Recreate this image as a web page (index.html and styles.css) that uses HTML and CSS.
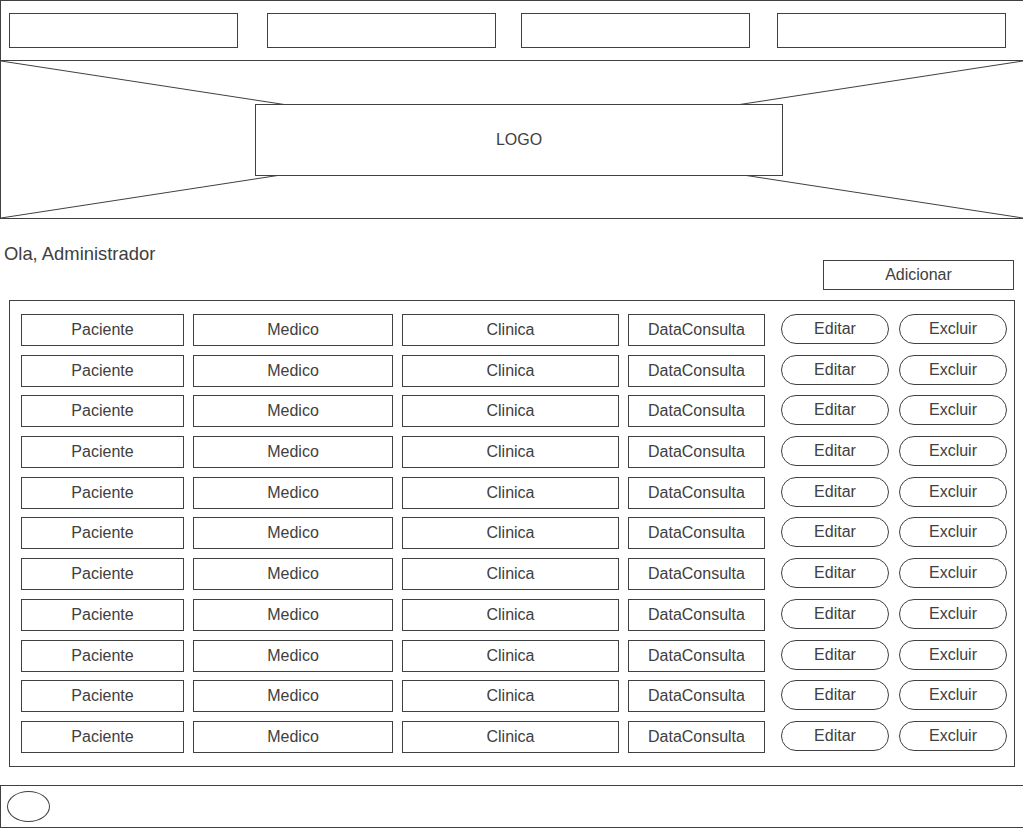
FILE: index.html
```html
<!DOCTYPE html>
<html lang="pt-BR">
<head>
  <meta charset="UTF-8">
  <title>Consultas - Administrador</title>
  <link rel="stylesheet" href="styles.css">
</head>
<body>
  <header class="topbar">
    <nav class="nav">
      <a class="nav-item" href="#"></a>
      <a class="nav-item" href="#"></a>
      <a class="nav-item" href="#"></a>
      <a class="nav-item" href="#"></a>
    </nav>
  </header>
  <section class="banner">
    <svg class="banner-cross" viewBox="0 0 100 100" preserveAspectRatio="none" aria-hidden="true">
      <line x1="0" y1="0" x2="100" y2="100" />
      <line x1="0" y1="100" x2="100" y2="0" />
    </svg>
    <div class="logo">LOGO</div>
  </section>

  <div class="toolbar">
    <p class="greeting">Ola, Administrador</p>
    <button class="add-btn">Adicionar</button>
  </div>

  <main class="consultas" id="consultas"></main>

  <footer class="footer">
    <div class="footer-dot"></div>
  </footer>

  <script>
    const list = document.getElementById("consultas");
    for (let i = 0; i < 11; i++) {
      const row = document.createElement("div");
      row.className = "row";
      row.innerHTML = `
        <div class="cell col-paciente">Paciente</div>
        <div class="cell col-medico">Medico</div>
        <div class="cell col-clinica">Clinica</div>
        <div class="cell col-data">DataConsulta</div>
        <button class="pill pill-edit">Editar</button>
        <button class="pill pill-delete">Excluir</button>`;
      list.appendChild(row);
    }
  </script>
</body>
</html>
```

FILE: styles.css
```css
html, body {
  margin: 0;
  padding: 0;
}
body {
  width: 1023px;
  overflow: hidden;
  background-color: #ffffff;
  color: #404040;
  font-family: "Liberation Sans", Arial, sans-serif;
  font-size: 16px;
}
button {
  font-family: inherit;
  font-size: 16px;
  color: #404040;
  background-color: #ffffff;
  padding: 0;
  cursor: pointer;
}

/* top nav */
.topbar {
  border: 1px solid #404040;
  border-right: none;
  padding: 12px 0 12px 8px;
}
.nav {
  display: flex;
  gap: 27px;
}
.nav-item {
  display: block;
  width: 229px;
  height: 35px;
  box-sizing: border-box;
  border: 1px solid #404040;
}
.nav-item:nth-child(2) {
  margin-left: 2px;
}
.nav-item:nth-child(3) {
  margin-left: -2px;
}

/* banner with image placeholder */
.banner {
  position: relative;
  height: 158px;
  box-sizing: border-box;
  border-left: 1px solid #404040;
  border-bottom: 1px solid #404040;
  padding: 43px 0 0 254px;
}
.banner-cross {
  position: absolute;
  left: 0;
  top: 0;
  width: 100%;
  height: 100%;
}
.banner-cross line {
  stroke: #404040;
  stroke-width: 1;
  vector-effect: non-scaling-stroke;
}
.banner .logo {
  position: relative;
  width: 528px;
  height: 72px;
  box-sizing: border-box;
  border: 1px solid #404040;
  background-color: #ffffff;
  display: flex;
  align-items: center;
  justify-content: center;
}

/* greeting + add */
.toolbar {
  display: flex;
  justify-content: space-between;
  align-items: flex-start;
  margin-top: 24px;
  padding: 0 9px 0 4px;
}
.greeting {
  margin: 0;
  font-size: 18.4px;
  line-height: 21px;
}
.add-btn {
  margin-top: 17px;
  width: 191px;
  height: 30px;
  border: 1px solid #404040;
}

/* consultas list */
.consultas {
  margin: 10px 0 0 9px;
  width: 1006px;
  box-sizing: border-box;
  border: 1px solid #404040;
  padding: 13px 7px 13px 11px;
  display: flex;
  flex-direction: column;
  gap: 8.7px;
}
.row {
  display: flex;
  align-items: flex-start;
  gap: 9px;
}
.cell {
  height: 32px;
  box-sizing: border-box;
  border: 1px solid #404040;
  line-height: 30px;
  text-align: center;
}
.col-paciente { width: 163px; }
.col-medico { width: 200px; }
.col-clinica { width: 217px; }
.col-data { width: 137px; }
.pill {
  width: 108px;
  height: 30px;
  border: 1px solid #404040;
  border-radius: 15px;
  line-height: 26px;
}
.pill-edit {
  margin-left: 7px;
}
.pill-delete {
  margin-left: 1px;
}

/* footer */
.footer {
  margin-top: 18px;
  border: 1px solid #404040;
  border-right: none;
  padding: 5px 0 5px 6px;
}
.footer-dot {
  width: 43px;
  height: 31px;
  box-sizing: border-box;
  border: 1px solid #404040;
  border-radius: 50%;
}
```
